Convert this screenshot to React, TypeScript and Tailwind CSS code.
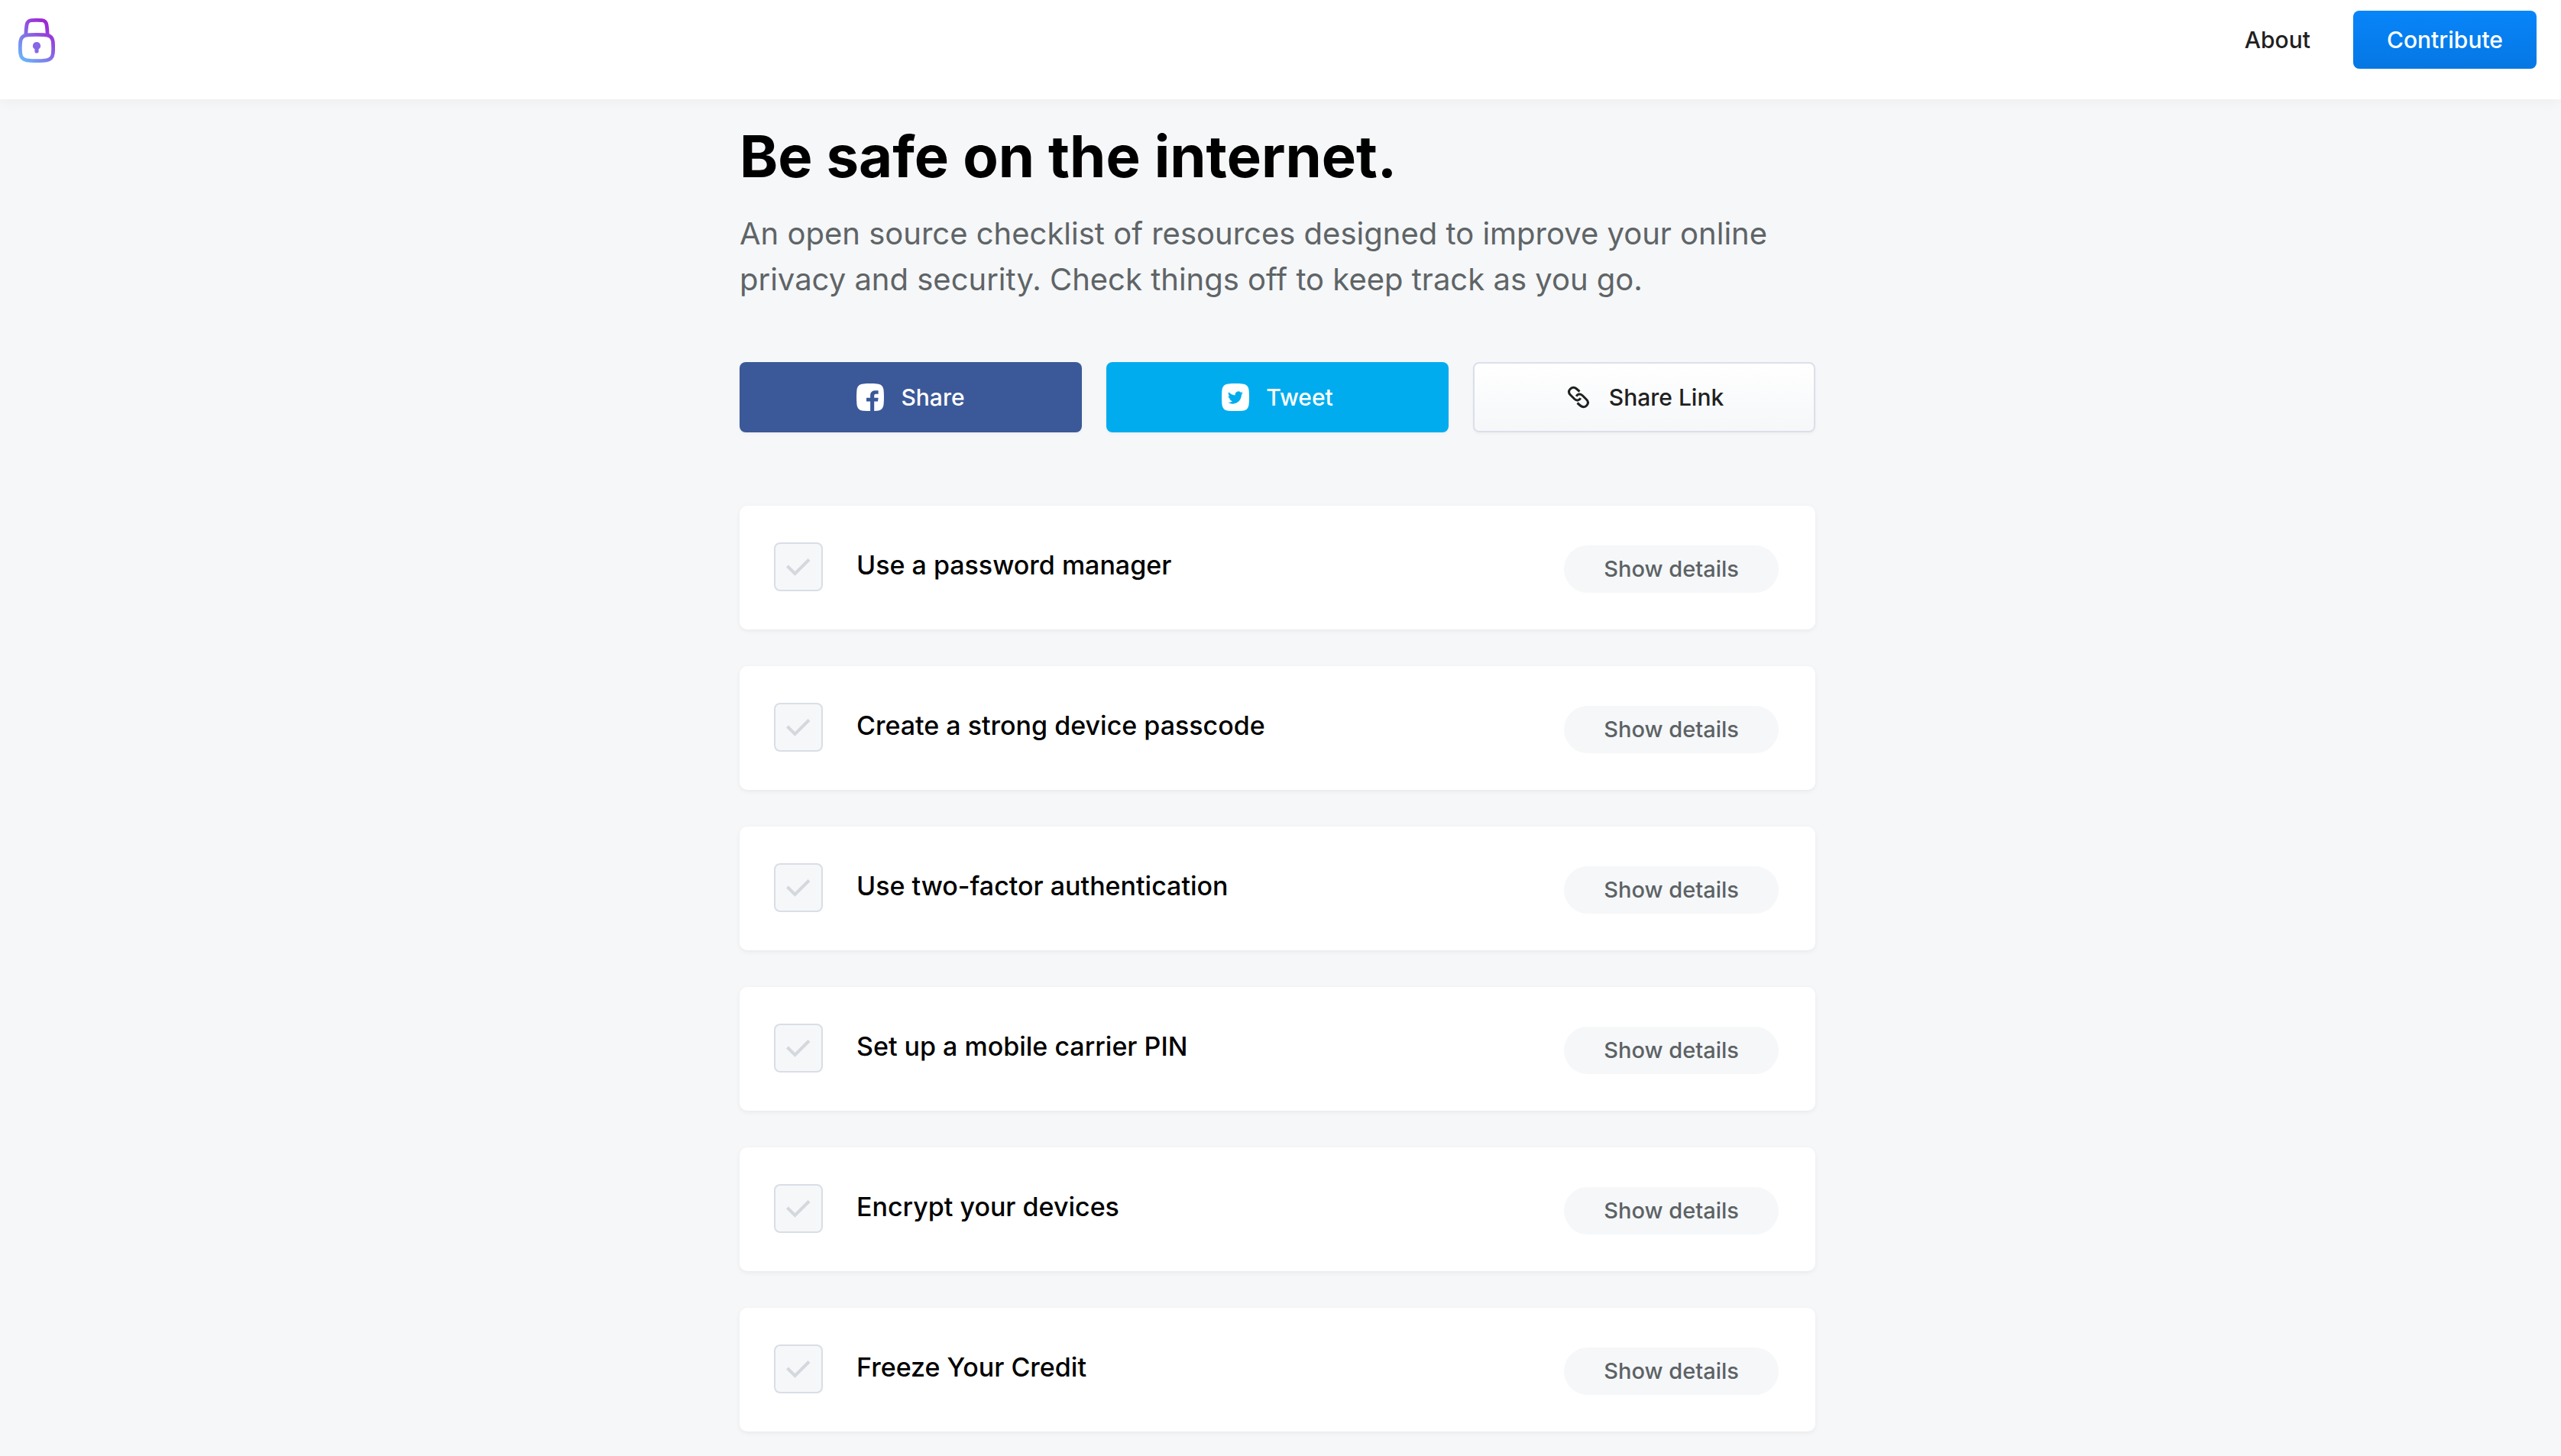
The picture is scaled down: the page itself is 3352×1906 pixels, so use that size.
import { useState } from "react";

const ITEMS = [
  "Use a password manager",
  "Create a strong device passcode",
  "Use two-factor authentication",
  "Set up a mobile carrier PIN",
  "Encrypt your devices",
  "Freeze Your Credit",
];

function LockLogo() {
  return (
    <svg viewBox="0 0 48 58" className="h-[58px] w-12" fill="none" aria-hidden="true">
      <defs>
        <linearGradient id="lock" x1="3" y1="54" x2="44" y2="8" gradientUnits="userSpaceOnUse">
          <stop offset="0" stopColor="#68b7fb" />
          <stop offset="0.5" stopColor="#8668e6" />
          <stop offset="1" stopColor="#a21fd0" />
        </linearGradient>
      </defs>
      <g stroke="url(#lock)" strokeWidth="4.8">
        <path d="M9.8 21.5C10 17 10.3 12.500 11 8.500C11.800 4.500 13.500 3 17 2.700C21.500 2.300 26.500 2.300 31 2.700C34.500 3 36.200 4.500 37 8.500C37.700 12.500 38 17 38.200 21.500" />
        <path d="M24 21.400C30 21.400 34.500 21.500 38 22.100C42.500 23 44.500 25.500 45.200 30C45.800 35.500 45.800 41.500 45.200 46.500C44.500 51.500 42 54 37 54.800C29 55.900 19 55.900 11 54.800C6 54 3.500 51.500 2.800 46.500C2.200 41.500 2.200 35.500 2.800 30C3.500 25.500 5.500 23 10 22.100C13.500 21.500 18 21.400 24 21.400Z" />
      </g>
      <path
        fill="#8668e6"
        d="M24 31a5 5 0 0 1 2.600 9.300V43a2.600 2.600 0 0 1-5.200 0v-2.700A5 5 0 0 1 24 31Z"
      />
    </svg>
  );
}

function FacebookIcon() {
  return (
    <svg viewBox="0 0 36 36" className="size-9" aria-hidden="true">
      <path
        fill="currentColor"
        d="M9 0.400C15 -0.100 21 -0.100 27 0.400C32.500 0.900 35.100 3.500 35.600 9C36.100 15 36.100 21 35.600 27C35.100 32.500 32.500 35.300 27 35.800L23.200 36V23.500H28L28.600 18.800H23.200V16C23.200 14.500 24 13.800 25.400 13.800H28.600V9.200H24.500C20.300 9.200 18.100 11.700 18.100 15.500V18.800H13V23.500H18.100V36C15 36 12 36 9 35.800C3.500 35.300 0.900 32.500 0.400 27C-0.100 21 -0.100 15 0.400 9C0.900 3.500 3.500 0.900 9 0.400Z"
      />
    </svg>
  );
}

function TwitterIcon() {
  return (
    <svg viewBox="0 0 36 36" className="size-9" aria-hidden="true">
      <path
        fill="currentColor"
        d="M9 0.400C15 -0.100 21 -0.100 27 0.400C32.500 0.900 35.100 3.500 35.600 9C36.100 15 36.100 21 35.600 27C35.100 32.500 32.500 35.300 27 35.800C21 36.100 15 36.100 9 35.800C3.500 35.300 0.900 32.500 0.400 27C-0.100 21 -0.100 15 0.400 9C0.900 3.500 3.500 0.900 9 0.400Z"
      />
      <path
        fill="#00acee"
        transform="translate(8 8.600) scale(0.830)"
        d="M23.953 4.570a10 10 0 0 1-2.825.775 4.958 4.958 0 0 0 2.163-2.723c-.951.555-2.005.959-3.127 1.184a4.920 4.920 0 0 0-8.384 4.482C7.690 8.095 4.067 6.130 1.640 3.162a4.822 4.822 0 0 0-.666 2.475c0 1.710.870 3.213 2.188 4.096a4.904 4.904 0 0 1-2.228-.616v.060a4.923 4.923 0 0 0 3.946 4.827 4.996 4.996 0 0 1-2.212.085 4.936 4.936 0 0 0 4.604 3.417 9.867 9.867 0 0 1-6.102 2.105c-.390 0-.779-.023-1.170-.067a13.995 13.995 0 0 0 7.557 2.209c9.053 0 13.998-7.496 13.998-13.985 0-.210 0-.420-.015-.630A9.935 9.935 0 0 0 24 4.590z"
      />
    </svg>
  );
}

function LinkIcon() {
  return (
    <svg
      viewBox="0 0 36 36"
      className="size-9"
      fill="none"
      stroke="currentColor"
      strokeWidth="3"
      aria-hidden="true"
    >
      <path d="M19.500 10.500L15.500 7C12.700 4.600 9.300 4.800 7.200 7.200C5 9.600 5.100 12.600 7.500 15L13 20.500C15.600 22.800 19 22.500 20.800 19.300" />
      <path d="M16.500 25.500L20.500 29C23.300 31.400 26.700 31.200 28.800 28.800C31 26.400 30.900 23.400 28.500 21L23 15.500C20.400 13.200 17 13.500 15.200 16.700" />
    </svg>
  );
}

function ChecklistItem({ title }: { title: string }) {
  const [checked, setChecked] = useState(false);
  const id = title.toLowerCase().replace(/[^a-z]+/g, "-");
  return (
    <li className="flex items-start rounded-[10px] bg-white pt-12 pr-12 pb-12 pl-[45px] shadow-[0_2px_6px_rgba(0,0,0,0.06)]">
      <span className="grid size-16 shrink-0">
        <input
          id={id}
          type="checkbox"
          checked={checked}
          onChange={(e) => setChecked(e.target.checked)}
          className="peer col-start-1 row-start-1 size-16 cursor-pointer appearance-none rounded-lg border-2 border-[#d9dee6] bg-[#f5f7f9]"
        />
        <svg
          viewBox="0 0 64 64"
          className="pointer-events-none col-start-1 row-start-1 size-16 text-[#d4d8dc] peer-checked:text-green-500"
          fill="none"
          stroke="currentColor"
          strokeWidth="4"
          aria-hidden="true"
        >
          <path d="M17.500 31L27.500 41L46 22.500" />
        </svg>
      </span>
      <label htmlFor={id} className="ml-11 flex-1 cursor-pointer text-[34px] leading-[60px] font-medium text-black">
        {title}
      </label>
      <button
        type="button"
        className="mt-1 rounded-full bg-[#f5f7f9] px-[52px] text-[29px] leading-[62px] font-medium text-[#5c6265]"
      >
        Show details
      </button>
    </li>
  );
}

export default function App() {
  return (
    <div className="min-h-screen overflow-hidden bg-[#f5f7f9] font-[Inter,sans-serif] text-[#1f2121]">
      <header className="flex items-start justify-between bg-white pt-[14px] pr-8 pb-10 pl-6 shadow-[0_4px_16px_rgba(0,0,0,0.04)]">
        <a href="#home" aria-label="Home" className="mt-[10px]">
          <LockLogo />
        </a>
        <nav className="flex items-center gap-14 text-[30px] leading-[76px] font-medium">
          <a href="#about">About</a>
          <a
            href="#contribute"
            className="rounded-lg bg-linear-to-b from-[#0885fa] to-[#0577e3] px-11 text-white"
          >
            Contribute
          </a>
        </nav>
      </header>

      <main className="pr-2">
        <div className="mx-auto max-w-[1408px] pt-7 pb-8">
          <h1 className="text-[76px] leading-[92px] font-bold text-black">Be safe on the internet.</h1>
          <p className="mt-[26px] text-[40px] leading-[60px] text-[#5f6466]">
            An open source checklist of resources designed to improve your online privacy and security. Check things off
            to keep track as you go.
          </p>

          <div className="mt-[78px] grid grid-cols-3 gap-8 text-[30px] font-medium">
            <button
              type="button"
              className="flex h-[92px] items-center justify-center gap-[22px] rounded-lg bg-[#3b5998] text-white shadow-[0_2px_4px_rgba(0,0,0,0.04)]"
            >
              <FacebookIcon />
              Share
            </button>
            <button
              type="button"
              className="flex h-[92px] items-center justify-center gap-[22px] rounded-lg bg-[#00acee] text-white shadow-[0_2px_4px_rgba(0,0,0,0.04)]"
            >
              <TwitterIcon />
              Tweet
            </button>
            <button
              type="button"
              className="flex h-[92px] items-center justify-center gap-[22px] rounded-lg border-2 border-[#dcdfea] bg-linear-to-b from-white to-[#f5f7f9] shadow-[0_2px_4px_rgba(0,0,0,0.04)]"
            >
              <LinkIcon />
              Share Link
            </button>
          </div>

          <ul className="mt-24 flex flex-col gap-12">
            {ITEMS.map((title) => (
              <ChecklistItem key={title} title={title} />
            ))}
          </ul>
        </div>
      </main>
    </div>
  );
}
